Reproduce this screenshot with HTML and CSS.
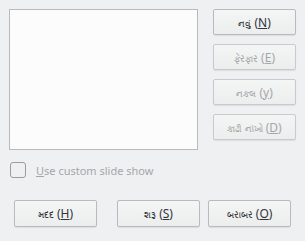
FILE: index.html
```html
<!DOCTYPE html>
<html lang="gu">
<head>
<meta charset="UTF-8">
<title>Custom Slide Show</title>
<link rel="stylesheet" href="styles.css">
</head>
<body>

<div class="dialog">
  <div class="top">
    <div class="list"></div>
    <div class="side">
      <button class="btn">નવું<span class="key"> (<u>N</u>)</span></button>
      <button class="btn" disabled>ફેરફાર<span class="key"> (<u>E</u>)</span></button>
      <button class="btn" disabled>નકલ<span class="key"> (<u>y</u>)</span></button>
      <button class="btn" disabled>કાઢી નાંખો<span class="key"> (<u>D</u>)</span></button>
    </div>
  </div>

  <label class="check">
    <span class="box"></span>
    <span class="check-text"><u>U</u>se custom slide show</span>
  </label>

  <div class="bottom">
    <button class="btn">મદદ<span class="key"> (<u>H</u>)</span></button>
    <button class="btn">શરૂ<span class="key"> (<u>S</u>)</span></button>
    <button class="btn">બરાબર<span class="key"> (<u>O</u>)</span></button>
  </div>
</div>

</body>
</html>
```

FILE: styles.css
```css
body {
  margin: 0;
  background: #eff0f1;
  font-family: "Noto Sans", "DejaVu Sans", sans-serif;
  font-size: 12px;
  color: #31363b;
}
.dialog {
  width: 305px;
  height: 241px;
  box-sizing: border-box;
  padding: 9px 0 0 9px;
}
.top {
  display: flex;
  gap: 15px;
}
.list {
  width: 189px;
  height: 141px;
  box-sizing: border-box;
  background: #fcfcfc;
  border: 1px solid #b8babc;
}
.side {
  display: flex;
  flex-direction: column;
  gap: 9px;
}
.btn {
  width: 83px;
  height: 26px;
  padding: 0;
  box-sizing: border-box;
  border: 1px solid #b9bbbd;
  border-radius: 2px;
  background: linear-gradient(#f4f5f5, #eceded);
  box-shadow: 0 1px 1px rgba(0, 0, 0, 0.08);
  font-family: inherit;
  font-size: 9px;
  color: #31363b;
}
.key {
  font-size: 12px;
}
.btn:disabled {
  color: #a4a7aa;
  border-color: #c8cacc;
}
.check {
  display: flex;
  align-items: center;
  gap: 10px;
  margin: 12px 0 0 1px;
  height: 16px;
}
.box {
  width: 16px;
  height: 16px;
  box-sizing: border-box;
  border: 1px solid #9a9c9f;
  border-radius: 3px;
  background: #eff0f1;
}
.check-text {
  color: #a4a7aa;
  font-size: 11px;
}
.bottom {
  display: flex;
  margin: 22px 0 0 5px;
}
.bottom .btn {
  height: 27px;
}
.bottom .btn + .btn {
  margin-left: 20px;
}
.bottom .btn + .btn + .btn {
  margin-left: 8px;
}
```
